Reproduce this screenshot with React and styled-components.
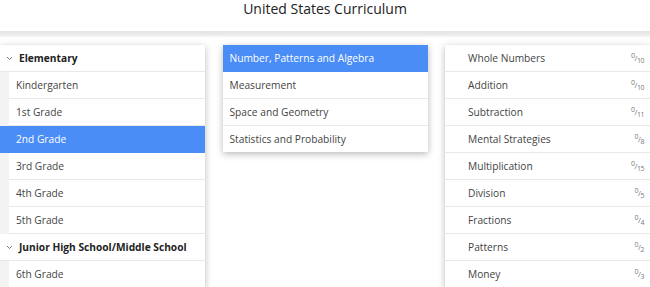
import styled, { createGlobalStyle } from "styled-components"

const GlobalStyle = createGlobalStyle`
  html, body {
    margin: 0;
    padding: 0;
    background: #ffffff;
    font-family: "Open Sans", "Noto Sans", sans-serif;
    color: #333;
  }
`

const grades = [
  { group: "Elementary", items: ["Kindergarten", "1st Grade", "2nd Grade", "3rd Grade", "4th Grade", "5th Grade"] },
  { group: "Junior High School/Middle School", items: ["6th Grade"] },
]

const strands = ["Number, Patterns and Algebra", "Measurement", "Space and Geometry", "Statistics and Probability"]

const topics = [
  ["Whole Numbers", 10],
  ["Addition", 10],
  ["Subtraction", 11],
  ["Mental Strategies", 8],
  ["Multiplication", 15],
  ["Division", 5],
  ["Fractions", 4],
  ["Patterns", 2],
  ["Money", 3],
]

const Chevron = () => (
  <svg width="7" height="5" viewBox="0 0 7 5">
    <polyline points="1,1 3.5,3.5 6,1" fill="none" stroke="#777" strokeWidth="1" />
  </svg>
)

const App = () => (
  <Page>
    <GlobalStyle />
    <Header>United States Curriculum</Header>
    <Band />
    <Columns>
      <Panel>
        {grades.map(g => (
          <div key={g.group}>
            <GroupRow><Chevron />{g.group}</GroupRow>
            {g.items.map(i => (
              <GradeRow key={i} $active={i === "2nd Grade"}>
                <GradeLabel $active={i === "2nd Grade"}>{i}</GradeLabel>
              </GradeRow>
            ))}
          </div>
        ))}
      </Panel>
      <Panel>
        {strands.map((s, n) => (
          <StrandRow key={s} $active={n === 0}>{s}</StrandRow>
        ))}
      </Panel>
      <Panel>
        {topics.map(([name, total]) => (
          <TopicRow key={name}>
            <span>{name}</span>
            <Score><sup>0</sup>/<sub>{total}</sub></Score>
          </TopicRow>
        ))}
      </Panel>
    </Columns>
  </Page>
)

const Page = styled.div`
  width: 650px;
  height: 287px;
  overflow: hidden;
`

const Header = styled.h1`
  margin: 0;
  height: 31px;
  display: flex;
  justify-content: center;
  line-height: 18px;
  font-size: 14px;
  font-weight: 400;
  color: #222;
`

const Band = styled.div`
  height: 7px;
  background: linear-gradient(#e4e4e4 0, #ececec 4px, #ffffff 7px);
`

const Columns = styled.div`
  display: flex;
  justify-content: space-between;
  align-items: flex-start;
  padding-top: 7px;
`

const Panel = styled.div`
  width: 205px;
  background: #fff;
  box-shadow: 0 2px 7px rgba(0, 0, 0, 0.28);
`

const Row = styled.div`
  height: 26px;
  display: flex;
  align-items: center;
  font-size: 10.2px;
  border-bottom: 1px solid #e9e9e9;
  box-sizing: content-box;
`

const GroupRow = styled(Row)`
  padding-left: 6px;
  gap: 6px;
  font-weight: 700;
  color: #222;
`

const GradeRow = styled.div`
  background: ${p => p.$active ? "#4a8df6" : "#f3f3f3"};
  padding-left: ${p => p.$active ? "0" : "9px"};
`

const GradeLabel = styled(Row)`
  padding-left: ${p => p.$active ? "16px" : "7px"};
  background: ${p => p.$active ? "#4a8df6" : "#fff"};
  color: ${p => p.$active ? "#fff" : "#444"};
  border-bottom-color: ${p => p.$active ? "#4a8df6" : "#e9e9e9"};
`

const StrandRow = styled(Row)`
  padding-left: 7px;
  background: ${p => p.$active ? "#4a8df6" : "#fff"};
  color: ${p => p.$active ? "#fff" : "#444"};
  border-bottom-color: ${p => p.$active ? "#4a8df6" : "#e9e9e9"};
  &:last-child { border-bottom: none; }
`

const TopicRow = styled(Row)`
  justify-content: space-between;
  padding: 0 6px 0 23px;
  color: #444;
`

const Score = styled.span`
  font-size: 8px;
  color: #777;
  letter-spacing: -0.5px;
  sup { font-size: 7px; vertical-align: 3px; }
  sub { font-size: 7px; vertical-align: -2px; }
`

export default App
